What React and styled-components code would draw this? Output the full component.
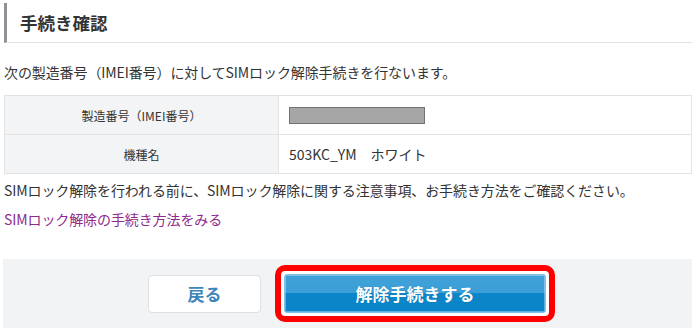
import React from 'react';
import styled, { createGlobalStyle } from 'styled-components';

const GlobalStyle = createGlobalStyle`
  html, body {
    margin: 0;
    padding: 0;
    background: #fff;
  }
  body {
    font-family: "Noto Sans CJK JP", "Noto Sans", sans-serif;
    color: #333;
  }
`;

const Page = styled.div`
  width: 689px;
  padding: 3px 0 0 3px;
`;

const Heading = styled.h2`
  margin: 0;
  height: 39px;
  display: flex;
  align-items: center;
  padding-left: 13px;
  border-left: 3px solid #8f9398;
  border-bottom: 1px solid #e2e2e2;
  font-size: 17.5px;
  font-weight: 700;
  color: #333;
  margin-left: 1px;
`;

const Text = styled.p`
  margin: ${p => p.$mt || 0}px 0 0 1px;
  font-size: 14px;
  line-height: 20px;
  color: ${p => (p.$link ? '#8e2a8c' : '#333')};
  letter-spacing: -0.1px;
`;

const Table = styled.table`
  margin-top: 13px;
  margin-left: 1px;
  width: 688px;
  border-collapse: collapse;
  border: 1px solid #e3e3e3;
`;

const Row = styled.tr`
  height: 39px;
`;

const Label = styled.th`
  width: 273px;
  background: #f3f4f6;
  border: 1px solid #e3e3e3;
  font-size: 12px;
  font-weight: 400;
  color: #333;
  text-align: center;
  padding: 0;
`;

const Value = styled.td`
  border: 1px solid #e3e3e3;
  padding: 0 0 0 10px;
  font-size: 14px;
  color: #333;
`;

const Masked = styled.div`
  width: 134px;
  height: 15px;
  background: #a6a6a6;
  border: 1px solid #727272;
`;

const Footer = styled.div`
  margin-top: 30px;
  height: 69px;
  background: #f2f3f5;
  display: flex;
  align-items: center;
  gap: 14px;
  padding-left: 145px;
`;

const BackButton = styled.button`
  width: 113px;
  height: 38px;
  background: #fff;
  border: 1px solid #dddfe2;
  border-radius: 4px;
  font-family: inherit;
  font-size: 17px;
  font-weight: 700;
  color: #3d86ba;
  cursor: pointer;
`;

const Highlight = styled.span`
  display: inline-flex;
  padding: 3px;
  border: 6px solid #ff0000;
  border-radius: 10px;
  background: #fff;
`;

const SubmitButton = styled.button`
  width: 262px;
  height: 39px;
  border: 1px solid #7fc0e8;
  border-radius: 3px;
  background: linear-gradient(to bottom, #41a2d8 0%, #3a9ed6 50%, #0c86c9 50%, #0a84c8 100%);
  box-shadow: inset 0 0 0 1px rgba(255, 255, 255, 0.35);
  font-family: inherit;
  font-size: 17px;
  font-weight: 700;
  color: #fff;
  text-shadow: 0 0 1px rgba(0, 60, 110, 0.4);
  cursor: pointer;
`;

const App = () => (
  <>
    <GlobalStyle />
    <Page>
      <Heading>手続き確認</Heading>
      <Text $mt={19}>次の製造番号（IMEI番号）に対してSIMロック解除手続きを行ないます。</Text>
      <Table>
        <tbody>
          <Row>
            <Label>製造番号（IMEI番号）</Label>
            <Value><Masked /></Value>
          </Row>
          <Row>
            <Label>機種名</Label>
            <Value>503KC_YM　ホワイト</Value>
          </Row>
        </tbody>
      </Table>
      <Text $mt={6}>SIMロック解除を行われる前に、SIMロック解除に関する注意事項、お手続き方法をご確認ください。</Text>
      <Text $mt={9} $link>SIMロック解除の手続き方法をみる</Text>
      <Footer>
        <BackButton>戻る</BackButton>
        <Highlight>
          <SubmitButton>解除手続きする</SubmitButton>
        </Highlight>
      </Footer>
    </Page>
  </>
);

export default App;
